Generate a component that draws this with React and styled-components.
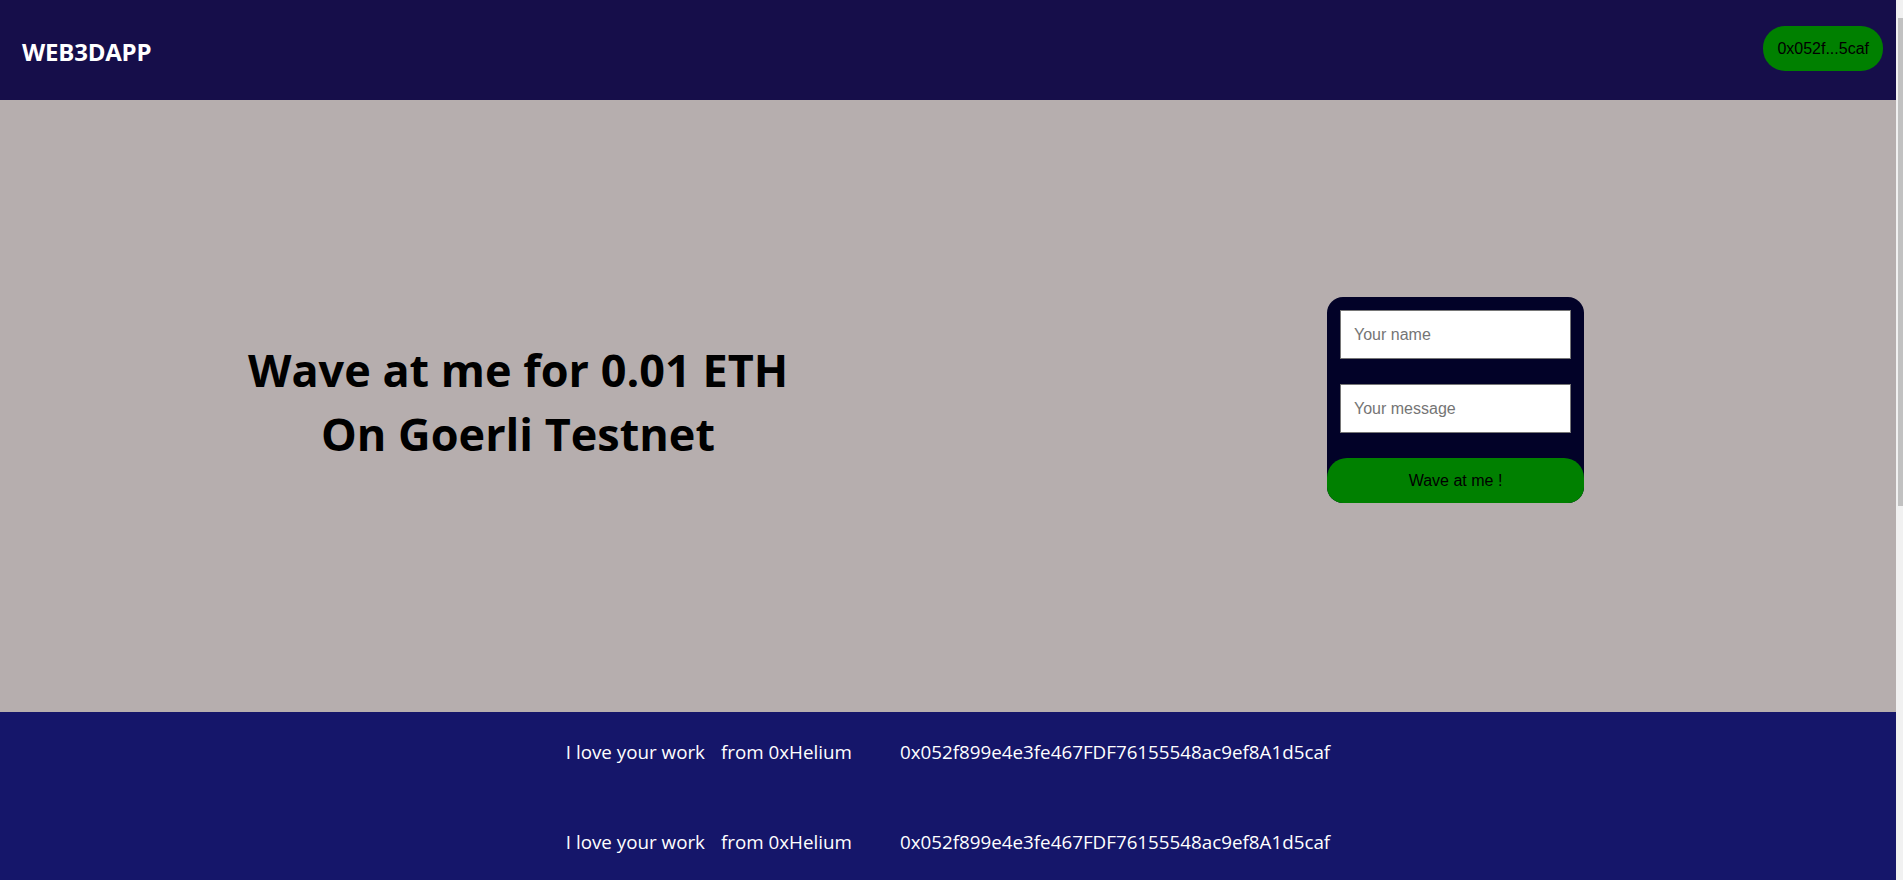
import React from 'react';
import styled, { createGlobalStyle } from 'styled-components';

const GlobalStyle = createGlobalStyle`
  html {
    background: #f1f1f1;
  }
  html, body {
    margin: 0;
    padding: 0;
  }
  body {
    font-family: "Open Sans", "Liberation Sans", sans-serif;
    margin-right: 7px;
  }
  ::-webkit-scrollbar {
    width: 7px;
  }
  ::-webkit-scrollbar-track {
    background: #f1f1f1;
  }
  ::-webkit-scrollbar-thumb {
    background: #c1c1c1;
    border-left: 2px solid #f1f1f1;
  }
`;

const messages = Array.from({ length: 9 }, () => ({
  text: 'I love your work',
  name: '0xHelium',
  address: '0x052f899e4e3fe467FDF76155548ac9ef8A1d5caf',
}));

function App() {
  return (
    <>
      <GlobalStyle />
      <Header>
        <Logo>WEB3DAPP</Logo>
        <WalletButton>0x052f...5caf</WalletButton>
      </Header>
      <Hero>
        <HeadingCol>
          <h1>
            Wave at me for 0.01 ETH
            <br />
            On Goerli Testnet
          </h1>
        </HeadingCol>
        <FormCard>
          <Input placeholder="Your name" />
          <Input placeholder="Your message" />
          <WaveButton>Wave at me !</WaveButton>
        </FormCard>
      </Hero>
      <Footer>
        {messages.map((m, i) => (
          <MessageRow key={i}>
            <span className="msg">{m.text}</span>
            <span className="from">from {m.name}</span>
            <span className="addr">{m.address}</span>
          </MessageRow>
        ))}
      </Footer>
      <ScrollThumb />
    </>
  );
}

const Header = styled.header`
  height: 100px;
  background-color: #160e4a;
  display: flex;
  align-items: center;
  justify-content: space-between;
  padding: 0 13px 0 22px;
`;

const Logo = styled.div`
  color: white;
  font-size: 24px;
  font-weight: 700;
  letter-spacing: -0.2px;
  margin-top: 2px;
`;

const WalletButton = styled.button`
  height: 45px;
  padding: 0 14px;
  border: none;
  border-radius: 22px;
  background-color: #008000;
  color: black;
  font-family: "Liberation Sans", Arial, sans-serif;
  font-size: 16px;
  margin-top: -3px;
`;

const Hero = styled.section`
  height: 612px;
  background-color: #b6aeae;
  display: flex;
  align-items: center;
`;

const HeadingCol = styled.div`
  flex: 0 0 1036px;
  text-align: center;
  margin-bottom: 8px;

  h1 {
    margin: 0;
    color: black;
    font-size: 45px;
    font-weight: 700;
    line-height: 64px;
  }
`;

const FormCard = styled.div`
  width: 257px;
  box-sizing: border-box;
  margin-left: 291px;
  margin-bottom: 12px;
  padding: 13px 13px 0;
  background-color: #020228;
  border-radius: 16px;
  overflow: hidden;
  display: flex;
  flex-direction: column;
  gap: 25px;
`;

const Input = styled.input`
  width: 100%;
  height: 49px;
  box-sizing: border-box;
  border: 1px solid #767676;
  padding: 0 13px;
  font-family: "Liberation Sans", Arial, sans-serif;
  font-size: 16px;
  color: black;
  background: white;
  outline: none;

  &::placeholder {
    color: #757575;
  }
`;

const WaveButton = styled.button`
  height: 45px;
  margin: 0 -13px;
  border: none;
  border-radius: 20px 20px 0 0;
  background-color: #008000;
  color: black;
  font-family: "Liberation Sans", Arial, sans-serif;
  font-size: 16px;
`;

const Footer = styled.footer`
  background-color: #15166a;
  padding: 28px 0 41px;
  display: flex;
  flex-direction: column;
  gap: 66px;
`;

const MessageRow = styled.div`
  display: flex;
  justify-content: center;
  color: white;
  font-size: 18.8px;
  line-height: 24px;

  .from {
    margin-left: 16px;
  }
  .addr {
    margin-left: 48px;
  }
`;

const ScrollThumb = styled.div`
  position: fixed;
  top: 18px;
  right: 0;
  width: 5px;
  height: 488px;
  background: #c1c1c1;
`;

export default App;
